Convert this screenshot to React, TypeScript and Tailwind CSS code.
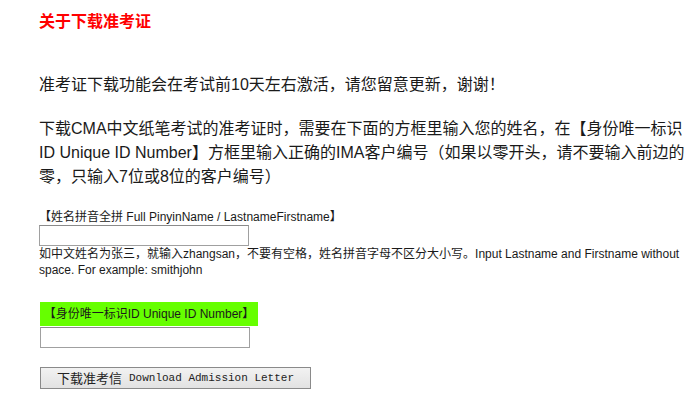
import React from "react";

export default function App() {
  const sans = { fontFamily: '"Liberation Sans", Arial, "Noto Sans CJK SC", sans-serif' };
  return (
    <div
      className="w-[700px] h-[405px] bg-white pl-[39px] pr-[15px] pt-[10px] text-[#1a1a1a] overflow-hidden"
      style={sans}
    >
      <h1 className="text-[16px] leading-6 font-bold text-[#ff0000]">关于下载准考证</h1>
      <p className="mt-[39px] text-[16px] leading-6">
        准考证下载功能会在考试前10天左右激活，请您留意更新，谢谢！
      </p>
      <p className="mt-[20px] text-[16px] leading-6">
        下载CMA中文纸笔考试的准考证时，需要在下面的方框里输入您的姓名，在【身份唯一标识ID Unique ID Number】方框里输入正确的IMA客户编号（如果以零开头，请不要输入前边的零，只输入7位或8位的客户编号）
      </p>
      <div className="mt-[21px] text-[12px] leading-[15px]">【姓名拼音全拼 Full PinyinName / LastnameFirstname】</div>
      <div className="w-[210px] h-[21px] border border-[#a0a0a0] border-t-[#8a8a8a] bg-white"></div>
      <p className="text-[12px] leading-4">
        如中文姓名为张三，就输入zhangsan，不要有空格，姓名拼音字母不区分大小写。Input Lastname and Firstname without space. For example: smithjohn
      </p>
      <div className="mt-[24px] ml-[1px] w-[218px] h-[24px] bg-[#66ff00] flex items-center justify-center text-[12px]">
        【身份唯一标识ID Unique ID Number】
      </div>
      <div className="mt-[1px] ml-[1px] w-[210px] h-[21px] border border-[#a0a0a0] border-t-[#8a8a8a] bg-white"></div>
      <button
        className="mt-[19px] ml-[1px] w-[271px] h-[22px] border border-[#8a8a8a] bg-gradient-to-b from-[#f2f2f2] to-[#e2e2e2] flex items-center justify-center text-[#222]"
      >
        <span className="text-[13px]" style={{ fontFamily: '"Noto Sans CJK SC", sans-serif' }}>下载准考信</span>
        <span className="text-[11px] ml-[7px]" style={{ fontFamily: '"Liberation Mono", monospace' }}>
          Download Admission Letter
        </span>
      </button>
    </div>
  );
}
